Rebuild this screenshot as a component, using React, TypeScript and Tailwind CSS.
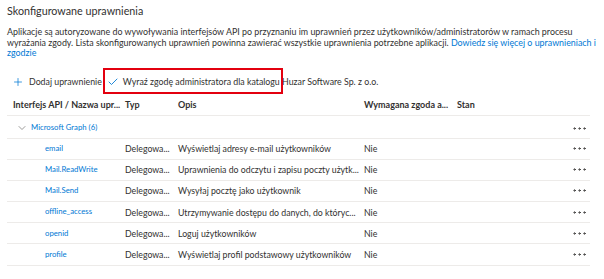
import { Plus, Check, ChevronDown, MoreHorizontal } from "lucide-react"

const rows = [
  { name: "email", opis: "Wyświetlaj adresy e-mail użytkowników" },
  { name: "Mail.ReadWrite", opis: "Uprawnienia do odczytu i zapisu poczty użytk..." },
  { name: "Mail.Send", opis: "Wysyłaj pocztę jako użytkownik" },
  { name: "offline_access", opis: "Utrzymywanie dostępu do danych, do któryc..." },
  { name: "openid", opis: "Loguj użytkowników" },
  { name: "profile", opis: "Wyświetlaj profil podstawowy użytkowników" },
]

const cols = "grid grid-cols-[118px_53px_186px_93px_1fr_34px] items-center"

export default function App() {
  return (
    <div
      className="w-[604px] h-[279px] bg-white text-[#323130] overflow-hidden px-[7px] pt-[2px]"
      style={{ fontFamily: 'Lato, "Liberation Sans", sans-serif' }}
    >
      <h1 className="text-[10.75px] leading-[17px] font-normal">Skonfigurowane uprawnienia</h1>

      <p className="mt-[8px] text-[8.9px] leading-[10.5px] w-[590px]">
        Aplikacje są autoryzowane do wywoływania interfejsów API po przyznaniu im uprawnień przez
        użytkowników/administratorów w ramach procesu wyrażania zgody. Lista skonfigurowanych uprawnień
        powinna zawierać wszystkie uprawnienia potrzebne aplikacji.{" "}
        <span className="text-[#0078d4]">Dowiedz się więcej o uprawnieniach i zgodzie</span>
      </p>

      {/* Toolbar */}
      <div className="mt-[12.5px] flex items-center h-[22px] text-[8.8px] pl-[5px]">
        <Plus size={12} strokeWidth={1.5} className="text-[#0078d4]" />
        <span className="ml-[5px]">Dodaj uprawnienie</span>
        <div className="relative flex items-center ml-[5px]">
          <Check size={12} strokeWidth={1.75} className="text-[#0078d4]" />
          <span className="ml-[4px] whitespace-nowrap">
            Wyraź zgodę administratora dla katalogu Huzar Software Sp. z o.o.
          </span>
          <div className="absolute left-[-4px] top-[-7px] w-[180px] h-[26px] border-2 border-[#e3000f]" />
        </div>
      </div>

      {/* Header */}
      <div className={`${cols} mt-[1px] h-[22px] text-[9px] font-bold border-b border-[#edebe9] w-[583px]`}>
        <div className="pl-[6px] whitespace-nowrap">Interfejs API / Nazwa upr...</div>
        <div>Typ</div>
        <div>Opis</div>
        <div className="whitespace-nowrap">Wymagana zgoda a...</div>
        <div>Stan</div>
        <div />
      </div>

      <div className={`${cols} h-[21.5px] pt-[3px] text-[7.75px] w-[583px]`}>
        <div className="flex items-center pl-[9px] text-[#0078d4] col-span-5">
          <ChevronDown size={12} strokeWidth={1.25} className="text-[#605e5c]" />
          <span className="ml-[3px]">Microsoft Graph (6)</span>
        </div>
        <div className="flex justify-end pr-[2px]">
          <MoreHorizontal size={17} strokeWidth={1.25} />
        </div>
      </div>

      {rows.map((r) => (
        <div key={r.name} className={`${cols} h-[21.2px] text-[8.75px] border-t border-[#edebe9] w-[583px]`}>
          <div className="pl-[38px] text-[7.75px] text-[#0078d4]">{r.name}</div>
          <div className="whitespace-nowrap">Delegowa...</div>
          <div className="whitespace-nowrap">{r.opis}</div>
          <div>Nie</div>
          <div />
          <div className="flex justify-end pr-[2px]">
            <MoreHorizontal size={17} strokeWidth={1.25} />
          </div>
        </div>
      ))}
      <div className="border-t border-[#edebe9] w-[583px]" />
    </div>
  )
}
